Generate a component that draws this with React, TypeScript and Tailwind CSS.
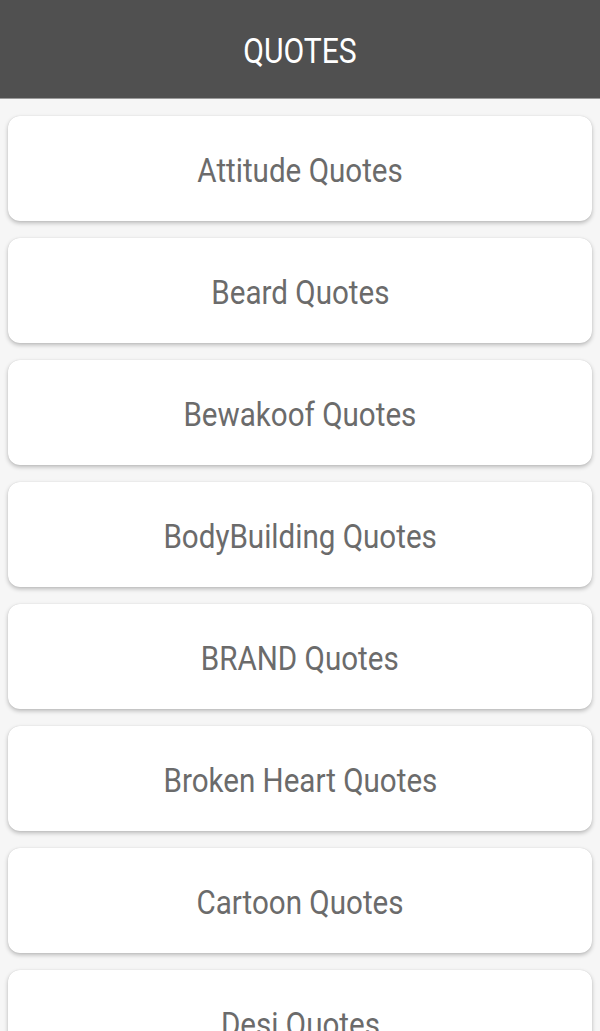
import React from "react";

const items = [
  "Attitude Quotes",
  "Beard Quotes",
  "Bewakoof Quotes",
  "BodyBuilding Quotes",
  "BRAND Quotes",
  "Broken Heart Quotes",
  "Cartoon Quotes",
  "Desi Quotes",
];

export default function App() {
  return (
    <div className="h-[1031px] w-[600px] overflow-hidden bg-[#f6f6f6]" style={{ fontFamily: "Roboto, 'Liberation Sans', sans-serif" }}>
      <div className="flex h-[99px] items-center justify-center bg-[#505050] border-b border-[#9a9a9a] pt-[4px]">
        <span className="inline-block scale-x-[0.86] text-[35px] leading-none text-white">QUOTES</span>
      </div>
      <div className="flex flex-col gap-[17px] px-[8px] pt-[17px]">
        {items.map((t) => (
          <div
            key={t}
            className="flex h-[105px] shrink-0 items-center justify-center rounded-[12px] bg-white pt-[3px] shadow-[0_2px_4px_rgba(0,0,0,0.25),0_0_1px_rgba(0,0,0,0.15)]"
          >
            <span className="inline-block scale-x-[0.87] text-[34px] leading-none text-[#6b6b6b]">{t}</span>
          </div>
        ))}
      </div>
    </div>
  );
}
